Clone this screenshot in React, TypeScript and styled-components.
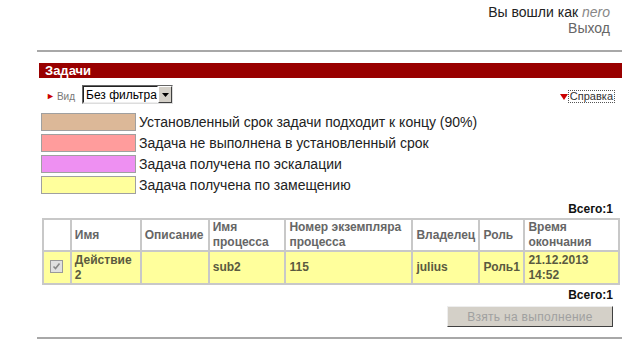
import React from "react";
import styled, { createGlobalStyle } from "styled-components";

const Global = createGlobalStyle`
  html, body { margin: 0; padding: 0; background: #fff; }
  body { font-family: "Liberation Sans", Arial, sans-serif; width: 629px; }
`;

const Page = styled.div`
  display: flex;
  flex-direction: column;
  padding: 4px 7px 0 37px;
  width: 629px;
  box-sizing: border-box;
`;

const UserBox = styled.div`
  display: flex;
  flex-direction: column;
  align-items: flex-end;
  padding-right: 12px;
  font-size: 14px;
  line-height: 16px;
`;

const UserLine = styled.div`
  color: #222;
  em { color: #888; }
`;

const Logout = styled.div`
  color: #666;
`;

const Rule = styled.div<{ $top: number }>`
  height: 2px;
  background: #a8a8a8;
  margin-top: ${(p) => p.$top}px;
`;

const TitleBar = styled.div`
  margin: 11px 0 0 2px;
  height: 15px;
  background: #990000;
  color: #fff;
  font-weight: bold;
  font-size: 13px;
  line-height: 15px;
  padding-left: 6px;
`;

const FilterRow = styled.div`
  display: flex;
  align-items: center;
  justify-content: space-between;
  margin: 7px 0 0 0;
  height: 19px;
  padding-left: 9px;
`;

const FilterLeft = styled.div`
  display: flex;
  align-items: center;
`;

const Arrow = styled.span`
  color: #cc0000;
  font-size: 9px;
  margin-right: 2px;
  margin-top: 2px;
`;

const Small = styled.span`
  color: #777;
  font-size: 10px;
  margin-top: 3px;
`;

const SelectBox = styled.div`
  margin-left: 7px;
  display: flex;
  align-items: stretch;
  height: 19px;
  width: 91px;
  box-sizing: border-box;
  border: 1px solid;
  border-color: #666 #ddd #ddd #666;
  background: #fff;
`;

const SelectText = styled.div`
  flex: 1;
  font-size: 12px;
  line-height: 17px;
  padding-left: 2px;
  color: #000;
  white-space: nowrap;
  overflow: hidden;
  border: 1px solid;
  border-color: #222 transparent #eee #222;
`;

const SelectBtn = styled.div`
  width: 14px;
  background: #d4d0c8;
  border: 1px solid;
  border-color: #fff #404040 #404040 #fff;
  display: flex;
  align-items: center;
  justify-content: center;
  box-sizing: border-box;
`;

const Help = styled.div`
  display: flex;
  align-items: center;
  margin-right: 7px;
  margin-top: 4px;
`;

const HelpLink = styled.span`
  font-size: 11px;
  color: #333;
  border: 1px dotted #555;
  padding: 0 1px;
  line-height: 11px;
`;

const Legend = styled.div`
  display: flex;
  flex-direction: column;
  gap: 3px;
  margin: 9px 0 0 4px;
`;

const LegendRow = styled.div`
  display: flex;
  align-items: center;
  gap: 3px;
  height: 18px;
`;

const Swatch = styled.div<{ $c: string }>`
  width: 95px;
  height: 18px;
  box-sizing: border-box;
  background: ${(p) => p.$c};
  border: 1px solid #a0a0a0;
`;

const LegendText = styled.span`
  font-size: 14px;
  color: #222;
`;

const Total = styled.div<{ $top: number }>`
  text-align: right;
  font-weight: bold;
  font-size: 12px;
  color: #111;
  padding-right: 9px;
  margin-top: ${(p) => p.$top}px;
  line-height: 14px;
`;

const Table = styled.table`
  margin: 2px 0 0 5px;
  width: 578px;
  border-collapse: collapse;
  border: 2px solid #c8c8c8;
  font-size: 12px;
  font-weight: bold;
`;

const Th = styled.th<{ $w: number }>`
  width: ${(p) => p.$w}px;
  height: 31px;
  box-sizing: border-box;
  border: 2px solid #c8c8c8;
  text-align: left;
  padding: 0 3px;
  color: #666;
  font-weight: bold;
  line-height: 15px;
  vertical-align: middle;
`;

const Tr = styled.tr<{ $bg?: string }>`
  background: ${(p) => p.$bg || "#fff"};
`;

const Td = styled.td<{ $center?: boolean }>`
  height: 33px;
  box-sizing: border-box;
  border: 2px solid #c8c8c8;
  padding: 0 3px;
  color: #5a5a40;
  line-height: 15px;
  text-align: ${(p) => (p.$center ? "center" : "left")};
  vertical-align: middle;
`;

const Check = styled.span`
  display: inline-flex;
  width: 11px;
  height: 11px;
  border: 1px solid #999;
  background: #e0e0e0;
  align-items: center;
  justify-content: center;
`;

const BtnRow = styled.div`
  display: flex;
  justify-content: flex-end;
  margin-top: 4px;
  padding-right: 9px;
`;

const Button = styled.button`
  width: 166px;
  height: 21px;
  background: #d4d0c8;
  color: #a0a0a0;
  font-family: "Liberation Sans", Arial, sans-serif;
  font-size: 12px;
  border: 1px solid;
  border-color: #eee #404040 #404040 #eee;
  padding: 0;
  letter-spacing: 0.3px;
`;

const legend = [
  { c: "#dcb898", t: "Установленный срок задачи подходит к концу (90%)" },
  { c: "#ff9c9c", t: "Задача не выполнена в установленный срок" },
  { c: "#ee90f2", t: "Задача получена по эскалации" },
  { c: "#ffff9c", t: "Задача получена по замещению" },
];

const cols = [
  { w: 28, t: "" },
  { w: 70, t: "Имя" },
  { w: 68, t: "Описание" },
  { w: 77, t: "Имя процесса" },
  { w: 128, t: "Номер экземпляра процесса" },
  { w: 67, t: "Владелец" },
  { w: 45, t: "Роль" },
  { w: 95, t: "Время окончания" },
];

export default function App() {
  return (
    <>
      <Global />
      <Page>
        <UserBox>
          <UserLine>
            Вы вошли как <em>nero</em>
          </UserLine>
          <Logout>Выход</Logout>
        </UserBox>
        <Rule $top={14} />
        <TitleBar>Задачи</TitleBar>
        <FilterRow>
          <FilterLeft>
            <Arrow>►</Arrow>
            <Small>Вид</Small>
            <SelectBox>
              <SelectText>Без фильтра</SelectText>
              <SelectBtn>
                <svg width="7" height="4" viewBox="0 0 7 4">
                  <path d="M0 0h7L3.5 4z" fill="#000" />
                </svg>
              </SelectBtn>
            </SelectBox>
          </FilterLeft>
          <Help>
            <svg width="8" height="8" viewBox="0 0 8 8">
              <path d="M0 1h8L4 7z" fill="#cc0000" />
            </svg>
            <HelpLink>Справка</HelpLink>
          </Help>
        </FilterRow>
        <Legend>
          {legend.map((l) => (
            <LegendRow key={l.t}>
              <Swatch $c={l.c} />
              <LegendText>{l.t}</LegendText>
            </LegendRow>
          ))}
        </Legend>
        <Total $top={8}>Всего:1</Total>
        <Table>
          <thead>
            <Tr>
              {cols.map((c, i) => (
                <Th key={i} $w={c.w}>
                  {c.t}
                </Th>
              ))}
            </Tr>
          </thead>
          <tbody>
            <Tr $bg="#ffff9c">
              <Td $center>
                <Check>
                  <svg width="9" height="9" viewBox="0 0 9 9">
                    <path d="M1.5 4.5l2 2 4-5" stroke="#888" strokeWidth="1.6" fill="none" />
                  </svg>
                </Check>
              </Td>
              <Td>Действие 2</Td>
              <Td></Td>
              <Td>sub2</Td>
              <Td>115</Td>
              <Td>julius</Td>
              <Td>Роль1</Td>
              <Td>21.12.2013 14:52</Td>
            </Tr>
          </tbody>
        </Table>
        <Total $top={3}>Всего:1</Total>
        <BtnRow>
          <Button disabled>Взять на выполнение</Button>
        </BtnRow>
        <Rule $top={10} />
      </Page>
    </>
  );
}
